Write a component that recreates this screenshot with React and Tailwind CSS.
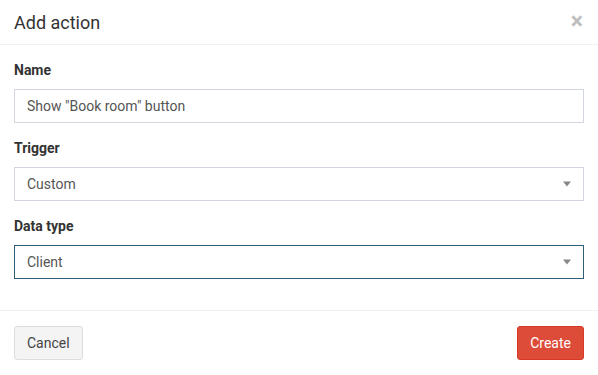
import React from 'react';

const Caret = () => (
    <span className="absolute right-[12px] top-1/2 -translate-y-1/2 w-0 h-0 border-l-[4px] border-r-[4px] border-t-[5px] border-l-transparent border-r-transparent border-t-[#888]"></span>
);

const Field = ({ label, children }) => (
    <div className="mb-[15px]">
        <label className="block text-[14px] leading-[20px] font-bold text-[#333] mb-[9px]">{label}</label>
        {children}
    </div>
);

const App = () => {
    return (
        <div className="w-[598px] h-[375px] bg-white text-[#333] overflow-hidden" style={{ fontFamily: 'Roboto, "Liberation Sans", sans-serif' }}>
            {/* Header */}
            <div className="flex items-center justify-between h-[45px] px-[14px] border-b border-[#f0f0f0]">
                <h4 className="text-[18px] leading-[20px] text-[#333] mt-[1px]">Add action</h4>
                <button className="text-[23px] leading-none font-bold text-black opacity-25 -mt-[1px] mr-[1px]">×</button>
            </div>

            {/* Body */}
            <div className="px-[14px] pt-[15px] pb-[16px]">
                <Field label="Name">
                    <div className="h-[34px] border border-[#d2d6de] px-[12px] flex items-center text-[14px] text-[#555]">
                        Show "Book room" button
                    </div>
                </Field>
                <Field label="Trigger">
                    <div className="relative h-[34px] border border-[#d2d6de] px-[12px] flex items-center text-[14px] text-[#555]">
                        Custom
                        <Caret />
                    </div>
                </Field>
                <Field label="Data type">
                    <div className="relative h-[34px] border border-[#2e5e7a] px-[12px] flex items-center text-[14px] text-[#555]">
                        Client
                        <Caret />
                    </div>
                </Field>
            </div>

            {/* Footer */}
            <div className="flex items-center justify-between px-[14px] py-[15px] border-t border-[#f0f0f0]">
                <button className="h-[34px] px-[12px] bg-[#f4f4f4] border border-[#ddd] rounded-[3px] text-[14px] text-[#444]">Cancel</button>
                <button className="h-[34px] px-[12px] bg-[#dd4b39] border border-[#d73925] rounded-[3px] text-[14px] text-white">Create</button>
            </div>
        </div>
    );
};

export default App;
